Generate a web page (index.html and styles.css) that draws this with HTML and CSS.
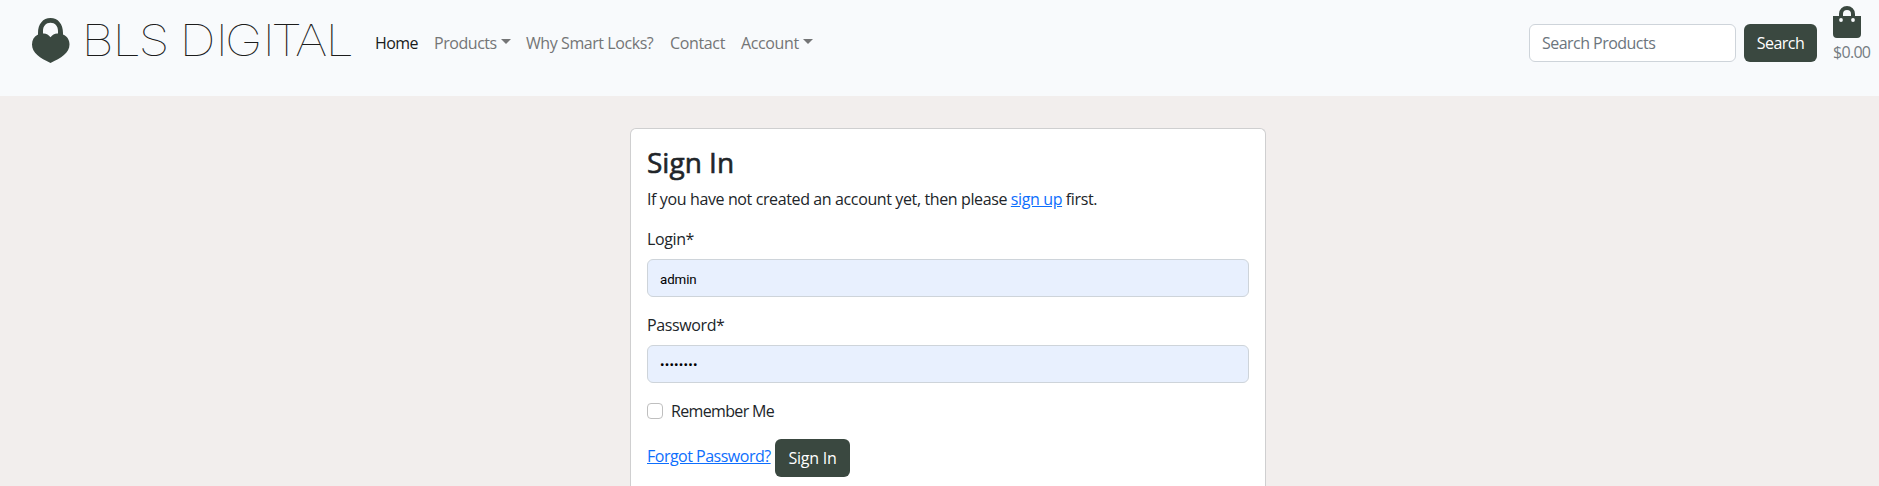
FILE: index.html
```html
<!DOCTYPE html>
<html lang="en">
<head>
<meta charset="utf-8">
<title>Sign In - BLS Digital</title>
<link rel="stylesheet" href="styles.css">
</head>
<body>
<header class="navbar">
  <a class="brand" href="#" aria-label="BLS Digital">
    <svg width="340" height="60" viewBox="0 0 340 60">
      <path class="lock" fill-rule="evenodd" d="M18 31V23C18 14 23 8 30.500 8S43 14 43 23V24.500C47.500 26.500 49.500 30 49.500 34.500C49.500 43 41 48 30.500 53C20 48 12 43 12 34.500C12 30 14 26.500 18 24.500ZM23 23.600C26 23.300 28.600 24.800 30.500 27.300C32.400 24.800 35 23.300 38 23.600V21C38 16 35 12.800 30.500 12.800S23 16 23 21Z"/>
      <text class="wordmark" transform="scale(1.15 1)" y="46.3" x="53.5 80.4 103 138.7 170 178.3 210.9 218.3 239.1 265.7">BLSDIGITAL</text>
    </svg>
  </a>
  <nav class="links">
    <a class="link home active" href="#"><span>Home</span></a>
    <a class="link products" href="#"><span>Products</span><i class="caret"></i></a>
    <a class="link why" href="#"><span>Why Smart Locks?</span></a>
    <a class="link contact" href="#"><span>Contact</span></a>
    <a class="link account" href="#"><span>Account</span><i class="caret"></i></a>
  </nav>
  <form class="search">
    <input class="control search-box" type="text" placeholder="Search Products">
    <button class="btn search-btn" type="button">Search</button>
  </form>
  <a class="cart" href="#">
    <svg width="28" height="32" viewBox="0 0 28 32">
      <path class="lock" fill-rule="evenodd" d="M0 10H6V8A8 8 0 0 1 22 8V10H28V28Q28 32 24 32H4Q0 32 0 28ZM10 10H18V8A4 4 0 0 0 10 8Z"/>
      <circle class="rivet" cx="8" cy="14" r="1.900"/><circle class="rivet" cx="20" cy="14" r="1.900"/>
    </svg>
    <span class="total">$0.00</span>
  </a>
</header>
<main class="card">
  <h1 class="title">Sign In</h1>
  <p class="intro">If you have not created an account yet, then please <a href="#">sign up</a> first.</p>
  <form>
    <label class="label" for="login">Login*</label>
    <input class="control filled" id="login" type="text" value="admin">
    <label class="label" for="password">Password*</label>
    <input class="control filled secret" id="password" type="password" value="password">
    <div class="remember"><input class="check" id="remember" type="checkbox"><label for="remember">Remember Me</label></div>
    <div class="actions"><a class="forgot" href="#">Forgot Password?</a><button class="btn signin" type="button">Sign In</button></div>
  </form>
</main>
</body>
</html>
```
FILE: styles.css
```css
* { box-sizing: border-box; }
html { overflow: hidden; height: 100%; }
body {
  display: flex;
  flex-direction: column;
  margin: 0;
  height: 486px;
  overflow: hidden;
  background: #f2eeed;
  color: #212529;
  font: 16px/24px "Open Sans", "Noto Sans", sans-serif;
  letter-spacing: -0.38px;
}
a { color: #0d6efd; }
.navbar { display: flex; flex: none; align-items: flex-start; height: 96px; background: #f8fafc; }
.brand { display: block; width: 340px; height: 60px; margin: 10px 0 0 20px; letter-spacing: 0; }
.brand svg, .cart svg { display: block; }
.lock { fill: #3a4840; }
.wordmark { fill: #1c1c1c; font-family: Inter, sans-serif; font-size: 44px; font-weight: 100; }
.links { display: flex; margin: 31px 0 0 15px; flex: 1; }
.link { color: #747576; text-decoration: none; white-space: nowrap; display: flex; align-items: center; }
.link.active { color: #191a1b; }
.home { width: 59px; letter-spacing: -0.6px; }
.products { width: 92px; letter-spacing: -0.45px; }
.why { width: 144px; letter-spacing: -0.43px; }
.contact { width: 71px; letter-spacing: -0.35px; }
.caret { margin: -3px 0 0 4px; border: 5px solid transparent; border-top-color: currentColor; border-bottom: 0; }
.search { display: flex; gap: 8px; margin-top: 24px; }
.control {
  display: block;
  width: 100%;
  height: 38px;
  padding: 6px 12px;
  border: 1px solid #ced4da;
  border-radius: 6px;
  background: #fff;
  color: #212529;
  font: inherit;
  letter-spacing: inherit;
}
.control::placeholder { color: #6c757d; opacity: 1; }
.search .search-box { width: 207px; letter-spacing: -0.53px; }
.btn {
  height: 38px;
  padding: 0;
  border: 0;
  border-radius: 6px;
  background: #3a4840;
  color: #fff;
  font: inherit;
  letter-spacing: inherit;
}
.search-btn { width: 73px; letter-spacing: -0.5px; }
.cart { width: 46px; margin: 6px 0 0 16px; text-decoration: none; }
.rivet { fill: #f8fafc; }
.total { display: block; margin-top: 2px; color: #747c82; letter-spacing: -0.7px; }
.card {
  flex: 1;
  width: 636px;
  margin: 32px 0 0 630px;
  padding: 16px 16px 0;
  border: 1px solid #cfcfd0;
  border-bottom: 0;
  border-radius: 6px 6px 0 0;
  background: #fff;
}
.title { margin: 0 0 8px; font-size: 28px; line-height: 34px; font-weight: 500; letter-spacing: 0; -webkit-text-stroke: 0.6px #212529; }
.intro { margin: 0 0 16px; }
.label { display: block; margin-bottom: 8px; }
.filled { margin-bottom: 16px; padding: 7px 12px 5px; background: #e8f0fe; color: #000; font: 13.333px/24px Roboto, sans-serif; letter-spacing: -0.1px; }
.secret { padding: 6px 12px; letter-spacing: 0.2px; }
.remember { display: flex; gap: 8px; height: 24px; }
.remember label { letter-spacing: -0.65px; }
.check { appearance: none; width: 16px; height: 16px; margin: 4px 0 0; border: 1px solid #bfbfbf; border-radius: 4px; background: #fff; }
.actions { display: flex; margin-top: 16px; }
.forgot { width: 128px; margin-top: 5px; white-space: nowrap; letter-spacing: -0.5px; }
.signin { width: 75px; letter-spacing: -0.25px; }
```
